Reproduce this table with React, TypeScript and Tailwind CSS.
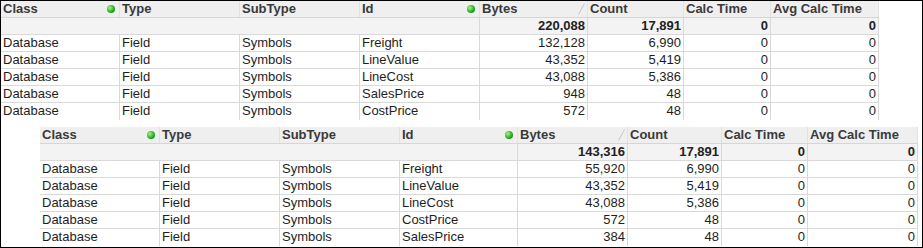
import React from "react"

type Row = { cls: string; type: string; sub: string; id: string; bytes: string; count: string; calc: string; avg: string }

const topRows: Row[] = [
    { cls: "Database", type: "Field", sub: "Symbols", id: "Freight", bytes: "132,128", count: "6,990", calc: "0", avg: "0" },
    { cls: "Database", type: "Field", sub: "Symbols", id: "LineValue", bytes: "43,352", count: "5,419", calc: "0", avg: "0" },
    { cls: "Database", type: "Field", sub: "Symbols", id: "LineCost", bytes: "43,088", count: "5,386", calc: "0", avg: "0" },
    { cls: "Database", type: "Field", sub: "Symbols", id: "SalesPrice", bytes: "948", count: "48", calc: "0", avg: "0" },
    { cls: "Database", type: "Field", sub: "Symbols", id: "CostPrice", bytes: "572", count: "48", calc: "0", avg: "0" },
]

const bottomRows: Row[] = [
    { cls: "Database", type: "Field", sub: "Symbols", id: "Freight", bytes: "55,920", count: "6,990", calc: "0", avg: "0" },
    { cls: "Database", type: "Field", sub: "Symbols", id: "LineValue", bytes: "43,352", count: "5,419", calc: "0", avg: "0" },
    { cls: "Database", type: "Field", sub: "Symbols", id: "LineCost", bytes: "43,088", count: "5,386", calc: "0", avg: "0" },
    { cls: "Database", type: "Field", sub: "Symbols", id: "CostPrice", bytes: "572", count: "48", calc: "0", avg: "0" },
    { cls: "Database", type: "Field", sub: "Symbols", id: "SalesPrice", bytes: "384", count: "48", calc: "0", avg: "0" },
]

const GreenDot = () => (
    <span className="w-[8px] h-[8px] rounded-full bg-[radial-gradient(circle_at_35%_35%,#a6f482,#22a822_60%,#0b6b0b)] shrink-0" />
)

const SortMark = () => (
    <svg width="7" height="12" viewBox="0 0 7 12" className="shrink-0">
        <line x1="0.5" y1="11.5" x2="6.5" y2="0.5" stroke="#c4c4c4" strokeWidth="1" />
    </svg>
)

const Th = ({ label, dot, sort }: { label: string; dot?: boolean; sort?: boolean }) => (
    <div className="flex items-center justify-between px-[2px] border-r border-[#e2e2e2] font-bold text-[#3a3a3a] overflow-hidden">
        <span className="whitespace-nowrap">{label}</span>
        {dot && <span className="mr-[2px] flex"><GreenDot /></span>}
        {sort && <SortMark />}
    </div>
)

const Cell = ({ children, right, bold }: { children?: React.ReactNode; right?: boolean; bold?: boolean }) => (
    <div className={`px-[2px] border-r border-[#d9d9d9] whitespace-nowrap overflow-hidden ${right ? "text-right" : ""} ${bold ? "font-bold" : ""}`}>
        {children}
    </div>
)

const StatsTable = ({ rows, total, cols }: { rows: Row[]; total: { bytes: string; count: string }; cols: string }) => (
    <div className="w-[878px] text-[13px] leading-[16px] font-['Liberation_Sans',Arial,sans-serif] text-[#1e1e1e]">
        <div className={`grid ${cols} h-[17px] bg-[#efefef] border-b border-[#d6d6d6]`}>
            <Th label="Class" dot />
            <Th label="Type" />
            <Th label="SubType" />
            <Th label="Id" dot />
            <Th label="Bytes" sort />
            <Th label="Count" />
            <Th label="Calc Time" />
            <Th label="Avg Calc Time" />
        </div>
        {/* totals row: first four columns merge into one blank area */}
        <div className={`grid ${cols} h-[17px] bg-[#f3f3f3] border-b border-[#d9d9d9] text-[#222]`}>
            <div />
            <div />
            <div />
            <div className="border-r border-[#d9d9d9]" />
            <Cell right bold>{total.bytes}</Cell>
            <Cell right bold>{total.count}</Cell>
            <Cell right bold>0</Cell>
            <Cell right bold>0</Cell>
        </div>
        {rows.map((r, i) => (
            <div key={i} className={`grid ${cols} h-[17px] ${i < rows.length - 1 ? "border-b border-[#d9d9d9]" : ""}`}>
                <Cell>{r.cls}</Cell>
                <Cell>{r.type}</Cell>
                <Cell>{r.sub}</Cell>
                <Cell>{r.id}</Cell>
                <Cell right>{r.bytes}</Cell>
                <Cell right>{r.count}</Cell>
                <Cell right>{r.calc}</Cell>
                <Cell right>{r.avg}</Cell>
            </div>
        ))}
    </div>
)

export default function App() {
    return (
        <div className="w-[923px] h-[248px] border border-black bg-white flex flex-col overflow-hidden">
            <StatsTable
                rows={topRows}
                total={{ bytes: "220,088", count: "17,891" }}
                cols="grid-cols-[119px_120px_120px_120px_108px_96px_87px_108px]"
            />
            <div className="mt-[7px] ml-[39px]">
                <StatsTable
                    rows={bottomRows}
                    total={{ bytes: "143,316", count: "17,891" }}
                    cols="grid-cols-[120px_120px_120px_118px_110px_94px_86px_110px]"
                />
            </div>
        </div>
    )
}
